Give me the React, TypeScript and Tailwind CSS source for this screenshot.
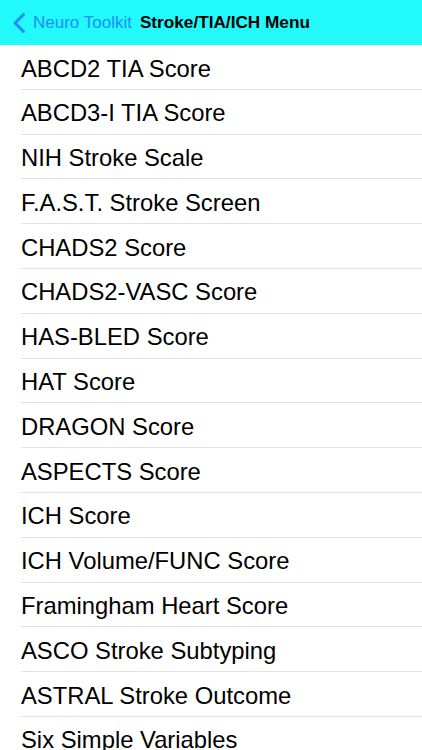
import React from "react";

const items = [
  "ABCD2 TIA Score",
  "ABCD3-I TIA Score",
  "NIH Stroke Scale",
  "F.A.S.T. Stroke Screen",
  "CHADS2 Score",
  "CHADS2-VASC Score",
  "HAS-BLED Score",
  "HAT Score",
  "DRAGON Score",
  "ASPECTS Score",
  "ICH Score",
  "ICH Volume/FUNC Score",
  "Framingham Heart Score",
  "ASCO Stroke Subtyping",
  "ASTRAL Stroke Outcome",
  "Six Simple Variables",
];

export default function App() {
  return (
    <div
      className="w-[422px] h-[750px] overflow-hidden bg-white"
      style={{ fontFamily: '"Liberation Sans", Arial, sans-serif' }}
    >
      <div className="h-[45px] bg-[#22f9fb] flex items-center">
        <svg width="14" height="22" viewBox="0 0 14 22" className="ml-[12px]">
          <path d="M11.5 2.5 L3 11 L11.5 19.5" fill="none" stroke="#1f8ef5" strokeWidth="3" strokeLinecap="round" strokeLinejoin="round" />
        </svg>
        <span className="ml-[7px] text-[17px] text-[#1f8ef5]">Neuro Toolkit</span>
        <span className="ml-[8px] text-[17.2px] font-bold text-black">Stroke/TIA/ICH Menu</span>
      </div>
      <div>
        {items.map((t, i) => (
          <div key={i} className="h-[44.8px] pl-[21px]">
            <div className="h-full flex items-center border-b border-[#e2e2e2] text-[23.8px] leading-none text-black pt-[3px]">
              {t}
            </div>
          </div>
        ))}
      </div>
    </div>
  );
}
